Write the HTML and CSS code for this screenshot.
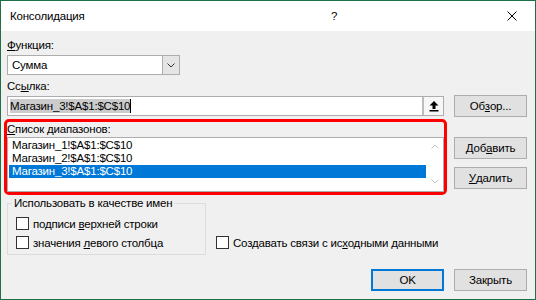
FILE: index.html
```html
<!DOCTYPE html>
<html lang="ru">
<head>
<meta charset="utf-8">
<title>Консолидация</title>
<link rel="stylesheet" href="styles.css">
</head>
<body>
<div class="window">
  <div class="titlebar">
    <span class="title">Консолидация</span>
    <span class="help">?</span>
    <svg class="close" width="10" height="10" viewBox="0 0 10 10"><path d="M0.5 0.5 L9.5 9.5 M9.5 0.5 L0.5 9.5" stroke="#000" stroke-width="1" fill="none"/></svg>
  </div>
  <div class="content">
    <div class="label"><u>Ф</u>ункция:</div>
    <div class="select">
      <span class="select-value">Сумма</span>
      <span class="select-btn"><svg width="8" height="5" viewBox="0 0 8 5"><path d="M0.5 0.5 L4 4 L7.5 0.5" stroke="#333" stroke-width="1" fill="none"/></svg></span>
    </div>
    <div class="label label-ref">Сс<u>ы</u>лка:</div>
    <div class="row ref-row">
      <div class="ref-input">
        <span class="ref-text">Магазин_3!$A$1:$C$10</span><span class="caret"></span>
        <span class="ref-btn"><svg width="10" height="11" viewBox="0 0 10 11"><path d="M5 0 L9.5 4.5 L6.5 4.5 L6.5 8 L3.5 8 L3.5 4.5 L0.5 4.5 Z" fill="#000"/><rect x="0.5" y="9" width="9" height="1.5" fill="#000"/></svg></span>
      </div>
      <button class="btn">Об<u>з</u>ор...</button>
    </div>
    <div class="row ranges-row">
      <div class="ranges">
        <div class="label ranges-label"><u>С</u>писок диапазонов:</div>
        <div class="listbox">
          <div class="items">
            <div class="item">Магазин_1!$A$1:$C$10</div>
            <div class="item">Магазин_2!$A$1:$C$10</div>
            <div class="item selected">Магазин_3!$A$1:$C$10</div>
          </div>
          <div class="scrollbar">
            <svg width="8" height="5" viewBox="0 0 8 5"><path d="M0.5 4.5 L4 1 L7.5 4.5" stroke="#c2c2c2" stroke-width="1" fill="none"/></svg>
            <svg width="8" height="5" viewBox="0 0 8 5"><path d="M0.5 0.5 L4 4 L7.5 0.5" stroke="#c2c2c2" stroke-width="1" fill="none"/></svg>
          </div>
        </div>
      </div>
      <div class="side">
        <button class="btn">Доб<u>а</u>вить</button>
        <button class="btn"><u>У</u>далить</button>
      </div>
    </div>
    <div class="row names-row">
      <fieldset class="group">
        <legend>Использовать в качестве имен</legend>
        <div class="check"><span class="box"></span><span>подписи <u>в</u>ерхней строки</span></div>
        <div class="check"><span class="box"></span><span>значения <u>л</u>евого столбца</span></div>
      </fieldset>
      <div class="check link-check"><span class="box"></span><span>Создавать связи с ис<u>х</u>одными данными</span></div>
    </div>
    <div class="footer">
      <button class="btn btn-default">OK</button>
      <button class="btn">Закрыть</button>
    </div>
  </div>
</div>
</body>
</html>
```
FILE: styles.css
```css
* { box-sizing: border-box; }
html, body { margin: 0; padding: 0; }
body {
  width: 536px;
  height: 300px;
  overflow: hidden;
  font-family: "Liberation Sans", Arial, sans-serif;
  font-size: 11.5px;
  letter-spacing: -0.2px;
  color: #000;
  background: #f0f0f0;
}
u { text-decoration: underline; text-underline-offset: 1px; }

.window {
  width: 536px;
  height: 300px;
  border: 1px solid #1e7145;
  background: #f0f0f0;
  display: flex;
  flex-direction: column;
}
.titlebar {
  height: 30px;
  flex: none;
  background: #fff;
  display: flex;
  align-items: center;
  padding-left: 9px;
}
.title { flex: 1; line-height: 30px; }
.help { width: 6px; margin-right: 170px; line-height: 30px; }
.close { margin-right: 18px; }

.content {
  padding: 7px 8px 0 6px;
  display: flex;
  flex-direction: column;
}
.label { line-height: 15px; height: 15px; }
.select {
  width: 173px;
  height: 20px;
  margin-top: 2px;
  border: 1px solid #adadad;
  background: #fff;
  display: flex;
}
.select-value { flex: 1; padding-left: 4px; line-height: 18px; }
.select-btn {
  width: 17px;
  border-left: 1px solid #adadad;
  background: #e5e5e5;
  display: flex;
  align-items: center;
  justify-content: center;
}
.label-ref { margin-top: 4px; }

.row { display: flex; gap: 10px; }
.ref-row { margin-top: 1px; align-items: center; }
.ref-input {
  width: 437px;
  height: 20px;
  border: 1px solid #adadad;
  background: #fff;
  display: flex;
  align-items: center;
}
.ref-text { margin-left: 2px; background: #cccccc; line-height: 14px; }
.caret { width: 1px; height: 14px; background: #000; }
.ref-btn {
  margin-left: auto;
  width: 21px;
  height: 18px;
  border-left: 2px solid #bdbdbd;
  background: #f7f7f7;
  display: flex;
  align-items: center;
  justify-content: center;
}

.btn {
  width: 73px;
  height: 22px;
  margin: 0;
  padding: 0;
  border: 1px solid #adadad;
  background: #e1e1e1;
  font: inherit;
  letter-spacing: inherit;
  color: #000;
  display: flex;
  align-items: center;
  justify-content: center;
}
.btn-default { border: 2px solid #0078d7; }

.ranges-row { margin-top: 2px; }
.ranges {
  width: 443px;
  flex: none;
  margin: 0 -3px;
  border: 3px solid #ff0000;
  border-radius: 5px;
}
.listbox {
  height: 55px;
  background: #fff;
  border: 1px solid #adadad;
  display: flex;
}
.items { flex: 1; padding: 1px 0 0 1px; }
.item { height: 13px; line-height: 13px; padding-left: 3px; }
.item.selected { background: #0078d7; color: #fff; }
.scrollbar {
  width: 17px;
  display: flex;
  flex-direction: column;
  justify-content: space-between;
  align-items: center;
  padding: 6px 0 7px;
}
.side {
  display: flex;
  flex-direction: column;
  gap: 8px;
  padding-top: 18px;
}

.names-row { margin-top: 1px; }
.group {
  margin: 0;
  width: 199px;
  border: 1px solid #dcdcdc;
  padding: 3px 0 2px 8px;
}
.group legend { padding: 0 2px; margin-left: -4px; line-height: 15px; }
.check {
  display: flex;
  align-items: center;
  gap: 4px;
  height: 19px;
}
.box {
  width: 13px;
  height: 13px;
  border: 1px solid #333;
  background: #fff;
  flex: none;
}
.link-check { align-self: flex-end; margin-bottom: 3px; }

.footer {
  display: flex;
  justify-content: flex-end;
  gap: 10px;
  margin-top: 14px;
}
```
